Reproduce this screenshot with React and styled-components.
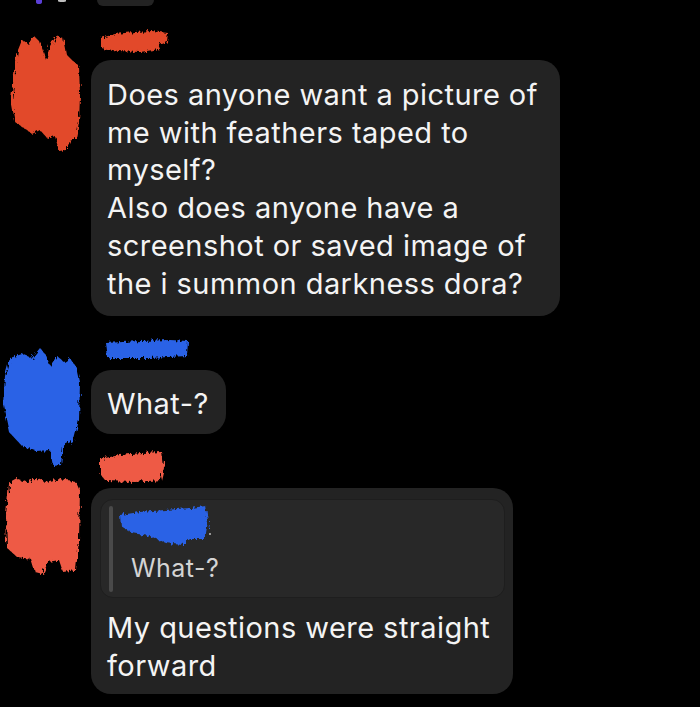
import React, { useId } from "react";
import styled, { createGlobalStyle } from "styled-components";

const Global = createGlobalStyle`
  html, body { margin: 0; padding: 0; background: #000; }
  body { font-family: "Inter", "Liberation Sans", sans-serif; -webkit-font-smoothing: antialiased; }
`;

const Page = styled.div`
  width: 700px;
  height: 707px;
  background: #000;
  overflow: hidden;
  display: flex;
  flex-direction: column;
`;

const TopStub = styled.div`
  display: flex;
  align-items: flex-start;
  height: 6px;
`;

const StubDots = styled.div`
  width: 97px;
  display: flex;
  gap: 16px;
  padding-left: 36px;
  box-sizing: border-box;
`;

const Dot = styled.span`
  width: ${(p) => p.$w}px;
  height: ${(p) => p.$h}px;
  border-radius: 0 0 50% 50%;
  background: ${(p) => p.$c};
  filter: blur(0.6px);
`;

const StubBubble = styled.div`
  width: 57px;
  height: 6px;
  background: #232323;
  border-radius: 0 0 12px 12px;
`;

const Row = styled.div`
  display: flex;
  align-items: flex-start;
  margin-top: ${(p) => p.$top}px;
`;

const AvatarSlot = styled.div`
  width: 91px;
  flex: none;
  height: 0;
  overflow: visible;
`;

const Content = styled.div`
  display: flex;
  flex-direction: column;
  align-items: flex-start;
`;

const NameMark = styled.div`
  margin-left: ${(p) => p.$left}px;
  margin-bottom: ${(p) => p.$gap}px;
  height: ${(p) => p.$h}px;
  line-height: 0;
`;

const Bubble = styled.div`
  background: #232323;
  border-radius: 20px;
  padding: ${(p) => p.$pad};
  color: #f4f4f4;
  font-size: 29px;
  line-height: 37.7px;
  letter-spacing: 0.45px;
  white-space: pre-line;
  box-sizing: border-box;
  width: ${(p) => (p.$w ? `${p.$w}px` : "auto")};
`;

const Quote = styled.div`
  display: flex;
  gap: 7px;
  background: #282828;
  border: 1px solid #1e1e1e;
  border-radius: 13px;
  padding: 6px 9px 5px 8px;
  margin: 0 0 11px -7px;
  width: 405px;
  box-sizing: border-box;
  height: 99px;
  letter-spacing: 0;
`;

const QuoteBar = styled.div`
  width: 4px;
  border-radius: 2px;
  background: #4a4a4a;
  flex: none;
`;

const QuoteBody = styled.div`
  display: flex;
  flex-direction: column;
`;

const QuoteText = styled.div`
  font-size: 25px;
  line-height: 28px;
  letter-spacing: 0.45px;
  color: #d4d4d4;
  margin-left: 11px;
  margin-top: 9px;
`;

function Scribble({ pts, color, x0, y0, w, h, extra }) {
  const id = useId().replace(/:/g, "");
  const d =
    "M" + pts.map(([x, y]) => `${x - x0},${y - y0}`).join(" L") + " Z";
  return (
    <svg width={w} height={h} viewBox={`0 0 ${w} ${h}`} style={{ overflow: "visible" }}>
      <defs>
        <filter id={id} x="-20%" y="-20%" width="140%" height="140%">
          <feTurbulence type="fractalNoise" baseFrequency="0.45 0.12" numOctaves="3" seed="5" />
          <feDisplacementMap in="SourceGraphic" scale="7" />
        </filter>
      </defs>
      <path d={d} fill={color} filter={`url(#${id})`} />
      {extra}
    </svg>
  );
}

const ORANGE = "#e24a2b";
const SALMON = "#ee5a44";
const BLUE = "#2a62e6";

const av1 = [[14,75],[18,50],[22,40],[28,44],[34,36],[40,42],[46,60],[50,46],[56,36],[63,38],[66,54],[72,60],[79,66],[80,95],[79,122],[76,138],[70,141],[66,150],[59,151],[55,136],[48,139],[40,130],[32,134],[24,128],[15,122],[11,100]];
const av2 = [[10,358],[22,354],[32,358],[40,348],[46,355],[50,366],[57,356],[64,362],[70,358],[77,368],[80,382],[79,420],[74,440],[63,446],[61,465],[53,466],[50,450],[36,451],[22,446],[9,432],[3,404],[5,376]];
const av3 = [[9,484],[18,479],[27,482],[36,478],[46,482],[56,479],[66,480],[76,481],[80,490],[79,540],[76,570],[63,572],[59,560],[48,562],[43,574],[35,572],[31,559],[17,557],[7,548],[6,515]];

const nm1 = [[101,38],[115,34],[135,32],[152,31],[168,33],[167,41],[158,44],[160,49],[140,52],[118,51],[101,48]];
const nm2 = [[106,343],[140,341],[170,340],[188,341],[187,356],[150,358],[108,358]];
const nm3 = [[100,459],[120,455],[142,453],[162,452],[164,468],[161,480],[135,482],[106,481],[100,474]];
const nmq = [[120,516],[140,513],[165,511],[190,509],[206,507],[208,522],[205,540],[190,540],[182,546],[166,544],[150,537],[132,534],[121,527]];

export default function App() {
  return (
    <Page>
      <Global />
      <TopStub>
        <StubDots>
          <Dot $w={6} $h={4} $c="#5b3fd6" />
          <Dot $w={8} $h={2} $c="#bfbfbf" />
        </StubDots>
        <StubBubble />
      </TopStub>

      <Row $top={24}>
        <AvatarSlot>
          <Scribble pts={av1} color={ORANGE} x0={0} y0={30} w={91} h={125} />
        </AvatarSlot>
        <Content>
          <NameMark $left={9} $gap={8} $h={22}>
            <Scribble pts={nm1} color={ORANGE} x0={100} y0={30} w={70} h={22} />
          </NameMark>
          <Bubble $pad="16px 16px 14px 16px" $w={469}>
            {"Does anyone want a picture of\nme with feathers taped to\nmyself?\nAlso does anyone have a\nscreenshot or saved image of\nthe i summon darkness dora?"}
          </Bubble>
        </Content>
      </Row>

      <Row $top={24}>
        <AvatarSlot>
          <Scribble pts={av2} color={BLUE} x0={0} y0={340} w={91} h={130} />
        </AvatarSlot>
        <Content>
          <NameMark $left={14} $gap={12} $h={18}>
            <Scribble pts={nm2} color={BLUE} x0={105} y0={340} w={85} h={18} />
          </NameMark>
          <Bubble $pad="15px 16px 11px 16px" $w={135}>
            What-?
          </Bubble>
        </Content>
      </Row>

      <Row $top={18}>
        <AvatarSlot>
          <Scribble pts={av3} color={SALMON} x0={0} y0={452} w={91} h={125} />
        </AvatarSlot>
        <Content>
          <NameMark $left={9} $gap={6} $h={30}>
            <Scribble pts={nm3} color={SALMON} x0={100} y0={452} w={66} h={30} />
          </NameMark>
          <Bubble $pad="11px 16px 10px 16px" $w={422}>
            <Quote>
              <QuoteBar />
              <QuoteBody>
                <Scribble
                  pts={nmq}
                  color={BLUE}
                  x0={120}
                  y0={507}
                  w={92}
                  h={39}
                  extra={<circle cx={90} cy={28} r={1} fill="#bbb" />}
                />
                <QuoteText>What-?</QuoteText>
              </QuoteBody>
            </Quote>
            {"My questions were straight\nforward"}
          </Bubble>
        </Content>
      </Row>
    </Page>
  );
}
